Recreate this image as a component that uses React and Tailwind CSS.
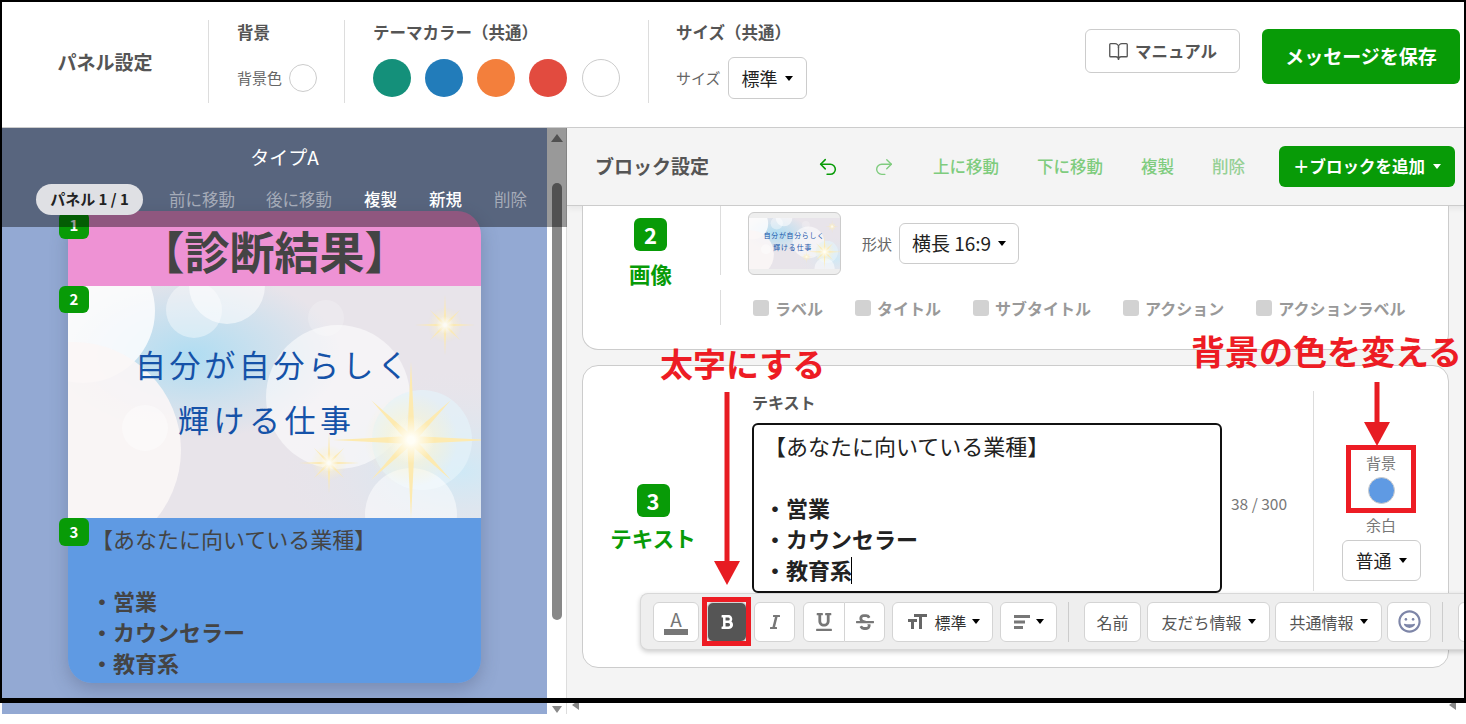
import { BookOpen, Undo2, Redo2 } from 'lucide-react'
import { FaBold, FaItalic, FaUnderline, FaStrikethrough, FaRegGrin } from 'react-icons/fa'
import { MdFormatSize } from 'react-icons/md'

const Caret = ({ className = 'border-t-black' }) => (
  <span className={`inline-block w-0 h-0 border-x-[4px] border-t-[5px] border-x-transparent ${className}`} />
)

const Badge = ({ n, className = '' }) => (
  <div className={`flex items-center justify-center w-[30px] h-[27px] rounded-md bg-[#089b07] text-white text-[15px] font-bold ${className}`}>{n}</div>
)

const BigBadge = ({ n }) => (
  <div className="flex items-center justify-center w-[33px] h-[33px] rounded-md bg-[#089b07] text-white text-[22px] font-bold">{n}</div>
)

function Sparkle({ x, y, r, o = 1 }) {
  const w = r * 0.05
  return (
    <g transform={`translate(${x} ${y})`} opacity={o}>
      <circle r={r * 0.6} fill="url(#glow)" />
      <polygon points={`0,${-r} ${w},0 0,${r} ${-w},0`} fill="#fdeab0" />
      <polygon points={`${-r},0 0,${w} ${r},0 0,${-w}`} fill="#fdeab0" />
      <polygon points={`0,${-r * 0.72} ${w},0 0,${r * 0.72} ${-w},0`} fill="#fdeab0" transform="rotate(45)" />
      <polygon points={`0,${-r * 0.72} ${w},0 0,${r * 0.72} ${-w},0`} fill="#fdeab0" transform="rotate(-45)" />
      <circle r={r * 0.3} fill="url(#core)" />
    </g>
  )
}

function ResultArt({ className = '' }) {
  return (
    <svg viewBox="0 0 413 232" className={`block ${className}`} preserveAspectRatio="none">
      <defs>
        <radialGradient id="sky" cx="0.3" cy="0.3" r="0.36">
          <stop offset="0" stopColor="#b0ddf2" />
          <stop offset="1" stopColor="#e8e4ea" />
        </radialGradient>
        <radialGradient id="sky2" cx="0.95" cy="0.8" r="0.45">
          <stop offset="0" stopColor="#cfe9f6" />
          <stop offset="1" stopColor="#e8e4ea" stopOpacity="0" />
        </radialGradient>
        <radialGradient id="glow">
          <stop offset="0" stopColor="#fff6d4" stopOpacity="0.9" />
          <stop offset="1" stopColor="#fff2c0" stopOpacity="0" />
        </radialGradient>
        <radialGradient id="core">
          <stop offset="0.15" stopColor="#fffef6" />
          <stop offset="1" stopColor="#fffdf0" stopOpacity="0" />
        </radialGradient>
      </defs>
      <rect width="413" height="232" fill="url(#sky)" />
      <rect width="413" height="232" fill="url(#sky2)" />
      <circle cx="15" cy="25" r="72" fill="#fff" opacity="0.8" />
      <circle cx="126" cy="24" r="28" fill="#fff" opacity="0.4" />
      <circle cx="159" cy="0" r="38" fill="#fff" opacity="0.55" />
      <circle cx="258" cy="32" r="18" fill="#fff" opacity="0.2" />
      <circle cx="5" cy="164" r="108" fill="#fbf6f6" opacity="0.9" />
      <circle cx="77" cy="142" r="23" fill="#fff" opacity="0.4" />
      <circle cx="270" cy="111" r="72" fill="#fff" opacity="0.55" />
      <circle cx="354" cy="154" r="50" fill="#e4f2fa" opacity="0.7" />
      <circle cx="343" cy="228" r="46" fill="#fff" opacity="0.5" />
      <text x="67" y="91" fontSize="31" letterSpacing="3.6" fill="#1552a8" fontFamily="'Noto Sans CJK JP', sans-serif">自分が自分らしく</text>
      <text x="110" y="146" fontSize="31" letterSpacing="4.5" fill="#1552a8" fontFamily="'Noto Sans CJK JP', sans-serif">輝ける仕事</text>
      <Sparkle x={377} y={39} r={30} o={0.9} />
      <Sparkle x={343} y={154} r={78} />
      <Sparkle x={261} y={177} r={30} o={0.9} />
    </svg>
  )
}

function PreviewText({ className = '' }) {
  return (
    <div className={className}>
      <div>【あなたに向いている業種】</div>
      <div className="h-[31px]" />
      <div className="font-bold">・営業</div>
      <div className="font-bold">・カウンセラー</div>
      <div className="font-bold">・教育系</div>
    </div>
  )
}

function Circle({ className }) {
  return <span className={`block w-[38px] h-[38px] rounded-full ${className}`} />
}

function Header() {
  return (
    <header className="flex h-[126px] bg-white border-b border-[#cccccc] pr-[6px]">
      <div className="w-[206px] flex items-center justify-center text-[19px] font-bold text-[#555555] pb-[4px]">パネル設定</div>
      <div className="w-[136px] mt-[18px] h-[83px] border-l border-[#dddddd] pl-[28px]">
        <div className="text-[16.5px] font-bold text-[#555555] leading-[24px]">背景</div>
        <div className="flex items-center gap-[7px] mt-[20px]">
          <span className="text-[15px] text-[#666666]">背景色</span>
          <span className="w-[28px] h-[28px] rounded-full bg-white border border-[#cccccc]" />
        </div>
      </div>
      <div className="w-[304px] mt-[18px] h-[83px] border-l border-[#dddddd] pl-[28px]">
        <div className="text-[16.5px] font-bold text-[#555555] leading-[24px]">テーマカラー（共通）</div>
        <div className="flex gap-[14px] mt-[15px]">
          <Circle className="bg-[#14907a]" />
          <Circle className="bg-[#227cba]" />
          <Circle className="bg-[#f37f3c]" />
          <Circle className="bg-[#e24b3f]" />
          <Circle className="bg-white border border-[#cccccc] ml-[1px]" />
        </div>
      </div>
      <div className="mt-[18px] h-[83px] border-l border-[#dddddd] pl-[27px]">
        <div className="text-[16.5px] font-bold text-[#555555] leading-[24px]">サイズ（共通）</div>
        <div className="flex items-center gap-[7px] mt-[13px]">
          <span className="text-[15px] text-[#666666]">サイズ</span>
          <button className="flex items-center gap-[7px] h-[42px] w-[79px] justify-center rounded-md border border-[#cccccc] bg-white text-[18px] text-[#222222]">
            標準 <Caret />
          </button>
        </div>
      </div>
      <div className="ml-auto flex items-start gap-[22px] pt-[27px]">
        <button className="flex items-center justify-center gap-[6px] w-[155px] h-[44px] rounded-md border border-[#cccccc] bg-white text-[16.5px] font-bold text-[#555555]">
          <BookOpen size={21} strokeWidth={1.5} /> マニュアル
        </button>
        <button className="w-[198px] h-[55px] rounded-md bg-[#089b07] text-white text-[19px] font-bold">メッセージを保存</button>
      </div>
    </header>
  )
}

function LeftPane() {
  return (
    <div className="relative flex w-[565px] overflow-hidden">
      <div className="w-[545px] bg-[#93a9d3] pt-[83px] pl-[66px]">
        <div className="relative w-[413px] h-[472px] rounded-3xl shadow-[0_6px_18px_rgba(60,70,100,0.3)]">
          <Badge n="1" className="absolute -left-[9px] top-[1px]" />
          <Badge n="2" className="absolute -left-[9px] top-[75px]" />
          <Badge n="3" className="absolute -left-[9px] top-[307px] h-[28px]" />
          <div className="h-[75px] rounded-t-3xl bg-[#ee92d4] flex items-center justify-center text-[45px] font-bold text-[#444444] pt-[4px]">【診断結果】</div>
          <ResultArt className="w-[413px] h-[232px]" />
          <div className="h-[165px] rounded-b-3xl bg-[#5f9ae3] pl-[23px] pt-[5px] overflow-hidden">
            <PreviewText className="text-[22px] leading-[31px] text-[#444444]" />
          </div>
        </div>
      </div>
      <div className="w-[20px] bg-white flex flex-col items-center border-r border-[#dddddd] pr-[2px] pl-[3px]">
        <span className="mt-[6px] w-0 h-0 border-x-[6px] border-b-[8px] border-x-transparent border-b-[#888888]" />
        <div className="mt-[41px] w-[10px] h-[437px] rounded-full bg-[#888888]" />
        <span className="mt-[86px] w-0 h-0 border-x-[5px] border-t-[7px] border-x-transparent border-t-[#888888]" />
      </div>
      <div className="absolute top-0 left-0 w-full h-[99px] bg-black/40 text-white">
        <div className="pt-[16px] text-center text-[19px] leading-[26px]">タイプA</div>
        <div className="flex items-center mt-[14px] ml-[34px] text-[16.5px]">
          <span className="flex items-center justify-center w-[107px] h-[31px] rounded-full bg-[#dfe0e4] text-[#222222] text-[15px] font-bold">パネル 1 / 1</span>
          <span className="ml-[26px] text-[#a5abb8]">前に移動</span>
          <span className="ml-[31px] text-[#a5abb8]">後に移動</span>
          <span className="ml-[32px] font-medium">複製</span>
          <span className="ml-[32px] font-medium">新規</span>
          <span className="ml-[32px] text-[#a5abb8]">削除</span>
        </div>
      </div>
    </div>
  )
}

const CheckLabel = ({ label, className = '' }) => (
  <span className={`flex items-center gap-[6px] text-[16px] font-bold text-[#999999] ${className}`}>
    <span className="w-[16px] h-[16px] rounded-[3px] bg-[#d2d2d2]" />
    {label}
  </span>
)

function ToolBtn({ children, className = 'bg-white text-[#555555]' }) {
  return (
    <button className={`flex items-center justify-center h-[40px] rounded-md border border-[#d4d4d4] text-[16px] shrink-0 ${className}`}>
      {children}
    </button>
  )
}

function Toolbar() {
  return (
    <div className="absolute left-[73px] top-[465px] right-0 h-[57px] flex items-center pl-[12px] rounded-l-lg bg-[#eeeeee] border border-r-0 border-[#d8d8d8] shadow-[0_2px_5px_rgba(0,0,0,0.2)] overflow-hidden">
      <ToolBtn className="w-[46px] flex-col bg-white text-[#777777]">
        <span className="text-[19px] leading-[21px]">A</span>
        <span className="w-[24px] h-[6px] bg-[#777777]" />
      </ToolBtn>
      <ToolBtn className="w-[40px] ml-[8px] bg-[#555555] border-[#555555] text-white"><FaBold size={16} /></ToolBtn>
      <ToolBtn className="w-[41px] ml-[7px] bg-white text-[#777777]"><FaItalic size={16} /></ToolBtn>
      <div className="flex ml-[8px] shrink-0">
        <ToolBtn className="w-[42px] rounded-r-none bg-white text-[#777777]"><FaUnderline size={18} /></ToolBtn>
        <ToolBtn className="w-[40px] rounded-l-none border-l-0 bg-white text-[#777777]"><FaStrikethrough size={18} /></ToolBtn>
      </div>
      <ToolBtn className="w-[101px] ml-[7px] gap-[5px] bg-white text-[#333333]">
        <MdFormatSize size={24} className="text-[#666666]" /> 標準 <Caret />
      </ToolBtn>
      <ToolBtn className="w-[57px] ml-[7px] gap-[6px] bg-white text-[#777777]">
        <svg width="16" height="16" viewBox="0 0 16 16" fill="currentColor">
          <rect x="0" y="1" width="16" height="3" />
          <rect x="0" y="6.5" width="11" height="3" />
          <rect x="0" y="12" width="9" height="3" />
        </svg>
        <Caret />
      </ToolBtn>
      <div className="w-px h-[40px] bg-[#cccccc] ml-[11px] shrink-0" />
      <ToolBtn className="w-[57px] ml-[15px] bg-white text-[#555555]">名前</ToolBtn>
      <ToolBtn className="w-[123px] ml-[6px] gap-[6px] bg-white text-[#555555]">友だち情報 <Caret /></ToolBtn>
      <ToolBtn className="w-[107px] ml-[5px] gap-[6px] bg-white text-[#555555]">共通情報 <Caret /></ToolBtn>
      <ToolBtn className="w-[44px] ml-[5px] bg-white text-[#7e86a8]"><FaRegGrin size={23} /></ToolBtn>
      <div className="w-px h-[40px] bg-[#cccccc] ml-[11px] shrink-0" />
      <ToolBtn className="w-[44px] ml-[15px] bg-white" />
    </div>
  )
}

function ImageCard() {
  return (
    <section className="ml-[15px] mr-[17px] h-[144px] bg-white border border-t-0 border-[#cccccc] rounded-b-2xl">
      <div className="flex h-[69px]">
        <div className="w-[138px] border-r border-[#dddddd] flex flex-col items-center pt-[12px] pr-[2px]">
          <BigBadge n="2" />
          <div className="mt-[8px] text-[21.5px] font-bold text-[#089b07] leading-[30px]">画像</div>
        </div>
        <div className="flex items-start pl-[27px] pt-[6px]">
          <div className="w-[93px] h-[63px] rounded-md border border-[#cccccc] bg-[#eeeeee] flex items-center overflow-hidden">
            <ResultArt className="w-full h-[51px]" />
          </div>
          <span className="ml-[21px] mt-[21px] text-[15px] text-[#666666]">形状</span>
          <button className="ml-[7px] mt-[11px] flex items-center justify-center gap-[7px] w-[120px] h-[41px] rounded-md border border-[#cccccc] bg-white text-[19px] text-[#222222]">
            横長 16:9 <Caret />
          </button>
        </div>
      </div>
      <div className="flex mt-[15px] h-[35px]">
        <div className="w-[138px] border-r border-[#dddddd]" />
        <div className="flex pl-[32px]">
          <CheckLabel label="ラベル" />
          <CheckLabel label="タイトル" className="ml-[32px]" />
          <CheckLabel label="サブタイトル" className="ml-[32px]" />
          <CheckLabel label="アクション" className="ml-[32px]" />
          <CheckLabel label="アクションラベル" className="ml-[32px]" />
        </div>
      </div>
    </section>
  )
}

function TextCard() {
  return (
    <section className="ml-[15px] mr-[17px] mt-[15px] h-[303px] bg-white border border-[#cccccc] rounded-2xl flex">
      <div className="w-[140px] flex flex-col items-center pt-[118px]">
        <BigBadge n="3" />
        <div className="mt-[6px] text-[21.5px] font-bold text-[#089b07] leading-[30px]">テキスト</div>
      </div>
      <div className="w-[590px] pl-[29px] pt-[24px]">
        <div className="text-[16px] font-bold text-[#555555] leading-[24px]">テキスト</div>
        <div className="flex items-center">
          <div className="w-[470px] h-[170px] mt-[9px] rounded-md border-2 border-[#111111] pl-[10px] pt-[5px] overflow-hidden">
            <div className="relative">
              <PreviewText className="text-[22px] leading-[31px] text-[#222222]" />
              <span className="absolute left-[87px] top-[127px] w-px h-[27px] bg-black" />
            </div>
          </div>
          <span className="ml-[9px] text-[15.5px] text-[#777777]">38 / 300</span>
        </div>
      </div>
      <div className="mt-[25px] h-[200px] border-l border-[#dddddd] w-[135px] flex flex-col items-center pt-[62px]">
        <span className="text-[15px] text-[#777777] leading-[20px]">背景</span>
        <span className="w-[27px] h-[27px] mt-[4px] rounded-full bg-[#5f9ae3] border border-[#cccccc]" />
        <span className="mt-[11px] text-[15px] text-[#777777] leading-[20px]">余白</span>
        <button className="mt-[5px] flex items-center justify-center gap-[7px] w-[79px] h-[41px] rounded-md border border-[#cccccc] bg-white text-[18px] text-[#222222]">
          普通 <Caret />
        </button>
      </div>
    </section>
  )
}

function RightPane() {
  return (
    <div className="relative flex-1 flex flex-col bg-[#f4f4f4] overflow-hidden">
      <div className="flex items-center h-[78px] border-b border-[#cccccc] shrink-0 pl-[28px] pr-[11px] text-[16.5px] font-medium text-[#7fcc7e] shadow-[0_3px_6px_rgba(0,0,0,0.05)]">
        <span className="text-[19px] font-bold text-[#555555]">ブロック設定</span>
        <Undo2 size={22} strokeWidth={1.7} className="ml-[108px] text-[#089b07]" />
        <Redo2 size={22} strokeWidth={1.5} className="ml-[34px]" />
        <span className="ml-[38px]">上に移動</span>
        <span className="ml-[38px]">下に移動</span>
        <span className="ml-[38px]">複製</span>
        <span className="ml-[38px] text-[#96d095]">削除</span>
        <button className="ml-auto flex items-center justify-center gap-[8px] w-[176px] h-[41px] rounded-md bg-[#089b07] text-white text-[16.5px] font-bold">
          ＋ブロックを追加 <Caret className="border-t-white" />
        </button>
      </div>
      <div className="flex-1">
        <ImageCard />
        <TextCard />
      </div>
      <div className="h-[16px] bg-white shrink-0 flex items-end justify-between pl-[5px] pr-[10px] pb-[4px]">
        <span className="w-0 h-0 border-y-[5px] border-r-[7px] border-y-transparent border-r-[#888888]" />
        <span className="w-0 h-0 border-y-[5px] border-r-[7px] border-y-transparent border-r-[#888888]" />
      </div>
      <Toolbar />
    </div>
  )
}

function Arrow({ className, h }) {
  return (
    <svg className={className} width="30" height={h} viewBox={`0 0 30 ${h}`}>
      <rect x="12.5" y="0" width="5" height={h - 20} fill="#e71c22" />
      <polygon points={`2,${h - 24} 28,${h - 24} 15,${h}`} fill="#e71c22" />
    </svg>
  )
}

export default function App() {
  return (
    <div className="relative w-[1466px] h-[724px] overflow-hidden bg-white font-['Noto_Sans_CJK_JP','Noto_Sans',sans-serif]">
      <div className="pt-[2px] pl-[2px] flex flex-col">
        <Header />
        <div className="flex h-[586px]">
          <LeftPane />
          <RightPane />
        </div>
      </div>

      {/* screenshot frame and red notes drawn on top */}
      <div className="absolute top-0 left-0 w-[1466px] h-[703px] border-2 border-b-[5px] border-black pointer-events-none" />
      <div className="absolute left-[660px] top-[339px] text-[33px] leading-[48px] font-bold text-[#ed1c24] whitespace-nowrap">太字にする</div>
      <div className="absolute left-[1191px] top-[327px] text-[34px] leading-[48px] font-bold text-[#ed1c24] whitespace-nowrap">背景の色を変える</div>
      <Arrow className="absolute left-[712px] top-[392px]" h={193} />
      <Arrow className="absolute left-[1362px] top-[382px]" h={64} />
      <div className="absolute left-[702px] top-[597px] w-[49px] h-[49px] border-[5px] border-[#ed1c24]" />
      <div className="absolute left-[1346px] top-[445px] w-[70px] h-[68px] border-[5px] border-[#ed1c24]" />
    </div>
  )
}
